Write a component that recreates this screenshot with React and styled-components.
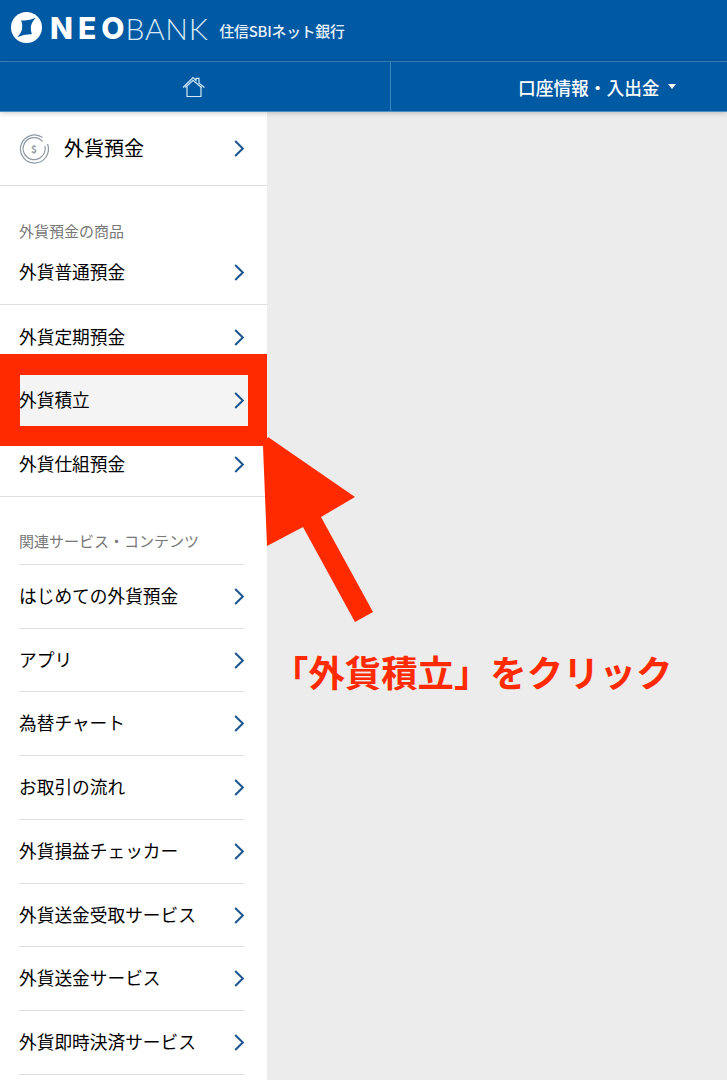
import React from 'react';
import styled, { createGlobalStyle } from 'styled-components';

const Global = createGlobalStyle`
  html, body { margin: 0; padding: 0; background: #ececec; }
  body { font-family: "Noto Sans CJK JP", "Noto Sans", sans-serif; }
`;
const Page = styled.div`
  position: relative;
  width: 727px;
  height: 1080px;
  overflow: hidden;
  background: #ececec;
`;
const Brand = styled.header`
  height: 62px;
  background: #0059a3;
  display: flex;
  align-items: center;
  padding-left: 11px;
  color: #fff;
  box-sizing: border-box;
  border-bottom: 1px solid #3f83bd;
`;
const LogoMark = styled.svg`
  width: 31px;
  height: 31px;
  margin-right: 8px;
  margin-top: -6px;
`;
const Neo = styled.span`
  font-family: "Inter", sans-serif;
  font-weight: 800;
  font-size: 30px;
  letter-spacing: 5px;
  margin-top: -6px;
  line-height: 1;
`;
const Bank = styled.span`
  font-family: "Lato", sans-serif;
  font-weight: 300;
  font-size: 30px;
  letter-spacing: 0.75px;
  margin-left: -4px;
  margin-top: -6px;
  line-height: 1;
  color: #d9e9f6;
`;
const BankName = styled.span`
  font-size: 14.8px;
  font-weight: 500;
  letter-spacing: -0.2px;
  margin-left: 11px;
  margin-top: 1px;
  line-height: 1;
  color: #e8f1f9;
`;
const Nav = styled.nav`
  height: 50px;
  background: #0059a3;
  display: grid;
  grid-template-columns: 391px 1fr;
  position: relative;
  z-index: 2;
  box-shadow: 0 1px 5px rgba(0,0,0,.22);
  box-sizing: border-box;
  border-bottom: 1px solid #4f8fc4;
`;
const HomeCell = styled.div`
  display: flex;
  align-items: center;
  justify-content: center;
  border-right: 1px solid #3f83bd;
  svg { margin-left: -3px; }
`;
const AccountCell = styled.div`
  display: flex;
  align-items: center;
  color: #fff;
  font-size: 17.7px;
  font-weight: 500;
  padding-left: 127px;
`;
const Caret = styled.i`
  width: 0;
  height: 0;
  margin-left: 8px;
  border-left: 4px solid transparent;
  border-right: 4px solid transparent;
  border-top: 5px solid #fff;
`;
const Sidebar = styled.aside`
  width: 267px;
  background: #fff;
  height: 968px;
`;
const TopRow = styled.div`
  height: 74px;
  box-sizing: border-box;
  border-bottom: 1px solid #dedede;
  display: flex;
  align-items: center;
  padding: 0 23px 0 19px;
  font-size: 20px;
  color: #000;
`;
const CoinIcon = styled.svg`
  width: 30px;
  height: 30px;
  margin-right: 15px;
`;
const TopLabel = styled.span`
  flex: 1;
  padding-bottom: 2px;
`;
const Grow = styled.span`
  flex: 1;
  padding-bottom: 3px;
`;
const SectionTitle = styled.div`
  font-size: 15px;
  line-height: 20px;
  color: #777;
  padding: ${p => p.$top}px 19px 0;
`;
const Row = styled.div`
  display: flex;
  align-items: center;
  box-sizing: border-box;
  height: ${p => p.$h}px;
  margin: 0 ${p => (p.$inset ? 23 : 0)}px 0 ${p => (p.$inset ? 19 : 0)}px;
  padding: 0 ${p => (p.$inset ? 0 : 23)}px 0 ${p => (p.$inset ? 0 : 19)}px;
  font-size: 17.7px;
  color: #000;
  background: ${p => (p.$active ? '#f4f4f4' : 'transparent')};
  border-bottom: ${p => (p.$line ? '1px solid #dedede' : 'none')};
`;
const Overlay = styled.svg`
  position: absolute;
  left: 0;
  top: 0;
  width: 727px;
  height: 1080px;
  z-index: 3;
  pointer-events: none;
`;
const Note = styled.div`
  position: absolute;
  z-index: 4;
  left: 272px;
  top: 646px;
  font-size: 36.4px;
  line-height: 50px;
  font-weight: 700;
  color: #ff2a00;
  white-space: nowrap;
`;

const Chevron = () => (
  <svg width="10" height="17" viewBox="0 0 10 17" fill="none">
    <path d="M1.2 1 L8.8 8.5 L1.2 16" stroke="#1a5590" strokeWidth="2" />
  </svg>
);

const Item = ({ children, ...p }) => (
  <Row {...p}>
    <Grow>{children}</Grow>
    <Chevron />
  </Row>
);

const related = [
  ['はじめての外貨預金', 64],
  ['アプリ', 63],
  ['為替チャート', 64],
  ['お取引の流れ', 64],
  ['外貨損益チェッカー', 64],
  ['外貨送金受取サービス', 63],
  ['外貨送金サービス', 64],
  ['外貨即時決済サービス', 64],
];

export default function App() {
  return (
    <Page>
      <Global />
      <Brand>
        <LogoMark viewBox="0 0 32 32">
          <circle cx="16" cy="16" r="16" fill="#fff" />
          <path d="M10.5 8.5 Q18 9.5 25.5 6 Q21 11 20.5 15 Q20 19 21.5 23 Q14 22.5 6.5 26 Q11 21 11.5 17 Q12 12 10.5 8.5 Z" fill="#0059a3" />
        </LogoMark>
        <Neo>NEO</Neo>
        <Bank>BANK</Bank>
        <BankName>住信SBIネット銀行</BankName>
      </Brand>
      <Nav>
        <HomeCell>
          <svg width="24" height="22" viewBox="0 0 24 22" fill="none" stroke="#d5e7f6" strokeWidth="1.2">
            <path d="M1 11.5 L11 1.5 L14 4.4 V2.4 H17 V7.3 L22.5 11.5" />
            <path d="M3.2 11.5 L11 4.2 L19.5 11.5" />
            <path d="M5 10.5 V20.5 H19 V10.5" />
          </svg>
        </HomeCell>
        <AccountCell>
          口座情報・入出金<Caret />
        </AccountCell>
      </Nav>
      <Sidebar>
        <TopRow>
          <CoinIcon viewBox="0 0 30 30" fill="none">
            <path d="M23.5 3.6 A14 14 0 1 0 28.5 10" stroke="#8f9aa5" strokeWidth="1.2" />
            <path d="M23.5 7.5 A11 11 0 1 0 25.8 12" stroke="#8f9aa5" strokeWidth="1.2" />
            <text x="15" y="19" textAnchor="middle" fontSize="10" fontWeight="700" fill="#8f9aa5">$</text>
          </CoinIcon>
          <TopLabel>外貨預金</TopLabel>
          <Chevron />
        </TopRow>
        <SectionTitle $top={35}>外貨預金の商品</SectionTitle>
        <Item $h={64} $line>外貨普通預金</Item>
        <Item $h={64}>外貨定期預金</Item>
        <Item $h={63} $active>外貨積立</Item>
        <Item $h={65} $line>外貨仕組預金</Item>
        <SectionTitle $top={34}>関連サービス・コンテンツ</SectionTitle>
        <Row $h={14} $inset $line />
        {related.map(([label, h]) => (
          <Item key={label} $h={h} $inset $line>{label}</Item>
        ))}
      </Sidebar>
      <Overlay viewBox="0 0 727 1080">
        <path fillRule="evenodd" fill="#ff2a00" d="M0 354 H267 V446 H0 Z M20 375 V426 H248 V375 Z" />
        <polygon fill="#ff2a00" points="263,446 268,437 355,497 321,517 373,612 355,622 303,527 267,546" />
      </Overlay>
      <Note>「外貨積立」をクリック</Note>
    </Page>
  );
}
